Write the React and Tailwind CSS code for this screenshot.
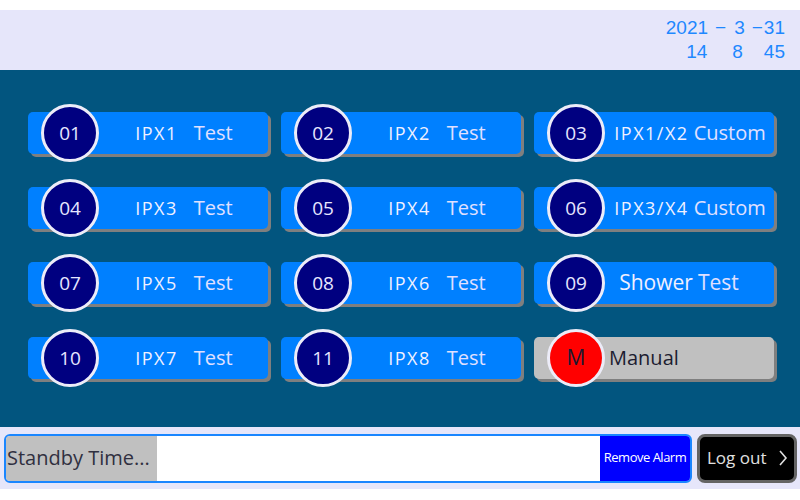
import React from "react";

const tests = [
  { num: "01", label: "IPX1", tail: "Test", gap: "gap-[16px]" },
  { num: "02", label: "IPX2", tail: "Test", gap: "gap-[16px]" },
  { num: "03", label: "IPX1/X2", tail: "Custom", gap: "gap-[5px]" },
  { num: "04", label: "IPX3", tail: "Test", gap: "gap-[16px]" },
  { num: "05", label: "IPX4", tail: "Test", gap: "gap-[16px]" },
  { num: "06", label: "IPX3/X4", tail: "Custom", gap: "gap-[5px]" },
  { num: "07", label: "IPX5", tail: "Test", gap: "gap-[16px]" },
  { num: "08", label: "IPX6", tail: "Test", gap: "gap-[16px]" },
  { num: "09", label: "Shower", tail: "Test", gap: "gap-[5px]", plain: true },
  { num: "10", label: "IPX7", tail: "Test", gap: "gap-[16px]" },
  { num: "11", label: "IPX8", tail: "Test", gap: "gap-[16px]" },
];

const font = { fontFamily: "'Open Sans', 'Noto Sans', sans-serif" };

const TestButton = ({ item }) => (
  <div className="relative h-[58px] flex items-center">
    <button
      className={`w-[240px] h-[42px] bg-[#0080ff] rounded-[5px] shadow-[3px_3px_0_#7f7f7f] flex items-center justify-center ${item.plain ? "pl-[50px]" : "pl-[72px]"}`}
    >
      <span className={`flex items-baseline whitespace-nowrap ${item.gap}`}>
        <span
          className={item.plain ? "text-[21px] text-[#f0f0ff]" : "text-[18px] text-[#f0f0ff] tracking-[1.5px] font-medium"}
        >
          {item.label}
        </span>
        <span className={`${item.plain ? "text-[21px]" : "text-[20px]"} text-[#e0e0ff]`}>{item.tail}</span>
      </span>
    </button>
    <div className="absolute left-[13px] top-0 w-[58px] h-[58px] rounded-full bg-[#000080] border-[3px] border-[#ececf8] flex items-center justify-center text-[19px] text-[#e6e6ff]">
      {item.num}
    </div>
  </div>
);

const ManualButton = () => (
  <div className="relative h-[58px] flex items-center">
    <button className="w-[240px] h-[42px] bg-[#c0c0c0] rounded-[5px] shadow-[3px_3px_0_#7f7f7f] flex items-center pl-[75px]">
      <span className="text-[20px] text-[#1c1c30]">Manual</span>
    </button>
    <div className="absolute left-[13px] top-0 w-[58px] h-[58px] rounded-full bg-[#ff0000] border-[3px] border-[#ececf8] flex items-center justify-center text-[21px] text-[#1a1a30]">
      M
    </div>
  </div>
);

export default function App() {
  return (
    <div className="w-[800px] h-[500px] bg-white flex flex-col" style={font}>
      <div className="h-[10px] bg-white" />

      {/* Header with date/time */}
      <header
        className="h-[60px] bg-[#e6e6fa] flex flex-col items-end justify-center pr-[15px] text-[#1e88ff] text-[19px] leading-[24px]"
        style={{ fontFamily: "'Liberation Sans', Arial, sans-serif" }}
      >
        <div className="flex items-baseline">
          <span>2021</span>
          <span className="ml-[7px]">−</span>
          <span className="ml-[8px]">3</span>
          <span className="ml-[7px]">−</span>
          <span className="ml-[1px]">31</span>
        </div>
        <div className="flex items-baseline">
          <span>14</span>
          <span className="ml-[25px]">8</span>
          <span className="ml-[21px]">45</span>
        </div>
      </header>

      {/* Test grid */}
      <main className="h-[357px] bg-[#02557f] pt-[34px] pl-[28px]">
        <div className="grid grid-cols-[240px_240px_240px] gap-x-[13px] gap-y-[17px]">
          {tests.map((t) => (
            <TestButton key={t.num} item={t} />
          ))}
          <ManualButton />
        </div>
      </main>

      {/* Bottom status bar */}
      <footer className="h-[62px] bg-[#e6e6fa] flex items-center pl-[4px] pr-[3px] gap-[5px]">
        <div className="flex-1 h-[49px] border-2 border-[#1a86ff] rounded-[6px] overflow-hidden flex">
          <div className="w-[151px] bg-[#c0c0c0] flex items-center pl-[1px] text-[20px] text-[#303040] whitespace-nowrap">
            Standby Time...
          </div>
          <div className="flex-1 bg-white" />
          <div className="w-[90px] bg-[#0000ff] flex items-center justify-center text-[13px] tracking-[-0.5px] text-white whitespace-nowrap">
            Remove Alarm
          </div>
        </div>
        <button className="w-[100px] h-[49px] bg-black border-[3px] border-[#646464] rounded-[8px] flex items-center pl-[7px] gap-[12px] text-[17px] text-[#e0e0e0] whitespace-nowrap">
          <span>Log out</span>
          <svg width="10" height="18" viewBox="0 0 10 18" fill="none" stroke="#e0e0e0" strokeWidth="1.6">
            <path d="M2 2 L8 9 L2 16" />
          </svg>
        </button>
      </footer>

      <div className="flex-1 bg-white" />
    </div>
  );
}
